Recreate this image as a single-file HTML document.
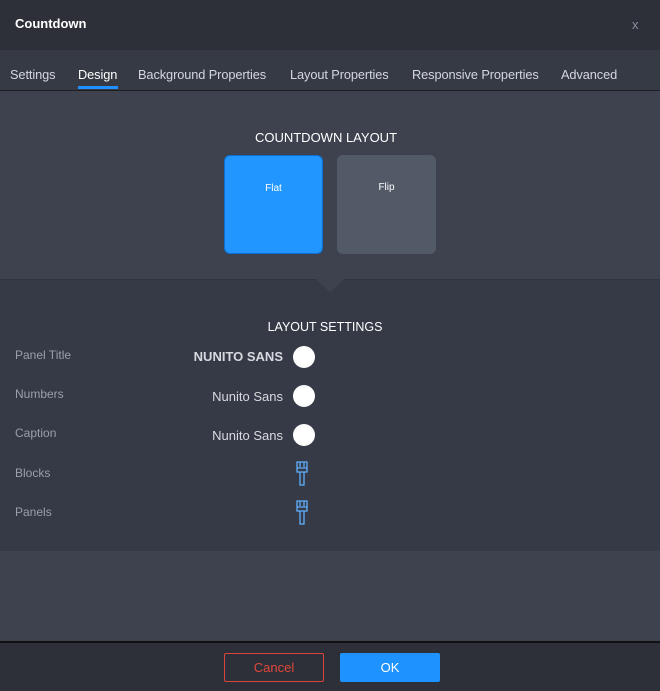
<!DOCTYPE html>
<html><head><style>
body{margin:0;width:660px;height:691px;background:#3d424e;font-family:"Liberation Sans",sans-serif;position:relative;overflow:hidden}
div{position:absolute;box-sizing:border-box}
.hd{left:0;top:0;width:660px;height:50px;background:#2d3039}
.tabs{left:0;top:50px;width:660px;height:41px;background:#353a45;border-bottom:1px solid #1c1e24}
.tab{top:17px;font-size:12.8px;color:#d4d7dd;letter-spacing:-0.1px}
.lower{left:0;top:279px;width:660px;height:272px;background:#353a46;border-top:1px solid #30343e}
.lbl{left:15px;font-size:12px;color:#9aa0aa}
.fn{font-size:13px;color:#d8dadf;text-align:right;width:120px;left:163px}
.circ{left:293px;width:22px;height:22px;border-radius:50%;background:#fff}
.ft{left:0;top:641px;width:660px;height:50px;background:#2d3039;border-top:2px solid #111}
</style></head><body>
<div class="hd"><div style="left:15px;top:16px;font-size:13px;font-weight:bold;color:#fff">Countdown</div>
<div style="left:632px;top:17px;font-size:13px;color:#8a8f99">x</div></div>
<div class="tabs">
<div class="tab" style="left:10px">Settings</div>
<div class="tab" style="left:78px;color:#fff">Design</div>
<div style="left:78px;top:36px;width:40px;height:3px;background:#1e90ff"></div>
<div class="tab" style="left:138px">Background Properties</div>
<div class="tab" style="left:290px">Layout Properties</div>
<div class="tab" style="left:412px">Responsive Properties</div>
<div class="tab" style="left:561px">Advanced</div>
</div>
<div style="left:0;top:130px;width:660px;text-align:center;font-size:13px;color:#fff;"><span style="margin-left:-8px">COUNTDOWN LAYOUT</span></div>
<div style="left:224px;top:155px;width:99px;height:99px;background:#2196ff;border:1px solid #0d6fd1;border-radius:6px;color:#fff;font-size:10px;text-align:center;padding-top:27px">Flat</div>
<div style="left:337px;top:155px;width:99px;height:99px;background:#525a68;border-radius:6px;color:#fff;font-size:10px;text-align:center;padding-top:27px">Flip</div>
<div class="lower">
<div style="left:316px;top:-1px;width:0;height:0;border-left:14px solid transparent;border-right:14px solid transparent;border-top:13px solid #3d424e"></div>
<div style="left:0;top:40px;width:660px;text-align:center;font-size:12.5px;color:#fff"><span style="margin-left:-10px">LAYOUT SETTINGS</span></div>
<div class="lbl" style="top:68px">Panel Title</div>
<div class="lbl" style="top:107px">Numbers</div>
<div class="lbl" style="top:146px">Caption</div>
<div class="lbl" style="top:186px">Blocks</div>
<div class="lbl" style="top:225px">Panels</div>
<div class="fn" style="top:69px;font-weight:bold">NUNITO SANS</div>
<div class="fn" style="top:109px">Nunito Sans</div>
<div class="fn" style="top:148px">Nunito Sans</div>
<div class="circ" style="top:66px"></div>
<div class="circ" style="top:105px"></div>
<div class="circ" style="top:144px"></div>
<svg style="position:absolute;left:295px;top:181px" width="14" height="26" viewBox="0 0 14 26"><path d="M2 1h10v10H2zM5 1v5M9 1v5M2 7h10M5 11v13h4V11" fill="none" stroke="#5fb0ff" stroke-width="1.3"/></svg>
<svg style="position:absolute;left:295px;top:220px" width="14" height="26" viewBox="0 0 14 26"><path d="M2 1h10v10H2zM5 1v5M9 1v5M2 7h10M5 11v13h4V11" fill="none" stroke="#5fb0ff" stroke-width="1.3"/></svg>
</div>
<div class="ft">
<div style="left:224px;top:10px;width:100px;height:29px;border:1px solid #d9453a;border-radius:2px;color:#e0483a;font-size:13px;text-align:center;line-height:27px">Cancel</div>
<div style="left:340px;top:10px;width:100px;height:29px;background:#1e93ff;border-radius:2px;color:#fff;font-size:13px;text-align:center;line-height:29px">OK</div>
</div>
</body></html>
